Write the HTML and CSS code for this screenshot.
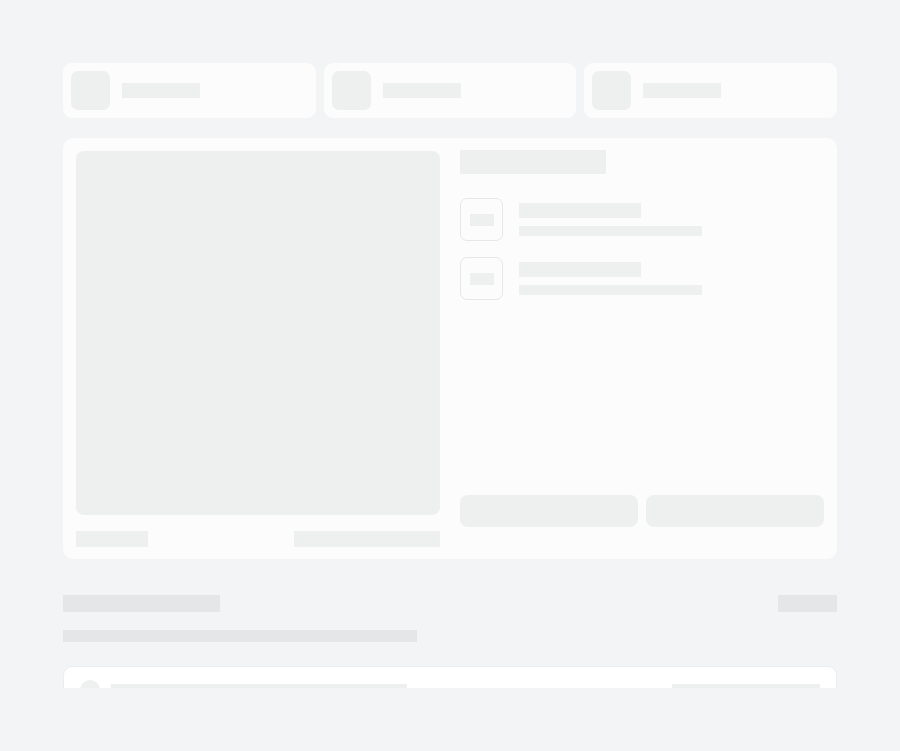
FILE: index.html
```html
<!DOCTYPE html>
<html lang="en">
<head>
<meta charset="utf-8">
<title>Loading</title>
<link rel="stylesheet" href="styles.css">
</head>
<body>
<div class="page">
  <div class="stats">
    <div class="stat"><div class="stat-icon sk"></div><div class="stat-line sk"></div></div>
    <div class="stat"><div class="stat-icon sk"></div><div class="stat-line sk"></div></div>
    <div class="stat"><div class="stat-icon sk"></div><div class="stat-line sk"></div></div>
  </div>

  <div class="main-card">
    <div class="media">
      <div class="media-img sk"></div>
      <div class="media-meta">
        <div class="meta-a sk"></div>
        <div class="meta-b sk"></div>
      </div>
    </div>
    <div class="details">
      <div class="details-title sk"></div>
      <div class="items">
        <div class="item">
          <div class="item-box"><div class="item-box-inner sk"></div></div>
          <div class="item-text">
            <div class="item-l1 sk"></div>
            <div class="item-l2 sk"></div>
          </div>
        </div>
        <div class="item">
          <div class="item-box"><div class="item-box-inner sk"></div></div>
          <div class="item-text">
            <div class="item-l1 sk"></div>
            <div class="item-l2 sk"></div>
          </div>
        </div>
      </div>
      <div class="actions">
        <div class="btn sk"></div>
        <div class="btn sk"></div>
      </div>
    </div>
  </div>

  <div class="section">
    <div class="section-head">
      <div class="section-title skb"></div>
      <div class="section-link skb"></div>
    </div>
    <div class="section-sub skb"></div>
    <div class="row-card">
      <div class="row-dot sk"></div>
      <div class="row-main sk"></div>
      <div class="row-side sk"></div>
    </div>
  </div>
</div>
</body>
</html>
```
FILE: styles.css
```css
html, body {
  margin: 0;
  padding: 0;
}
body {
  background: #f3f4f6;
  font-family: "Liberation Sans", Arial, sans-serif;
}
.page {
  box-sizing: border-box;
  height: 688px;
  overflow: hidden;
  padding: 63px 63px 0 63px;
}
.sk {
  background: #eeefef;
}
.skb {
  background: #e5e6e8;
}

/* stats */
.stats {
  display: grid;
  grid-template-columns: repeat(3, 1fr);
  gap: 8px;
}
.stat {
  box-sizing: border-box;
  height: 55px;
  padding: 8px;
  background: #fcfcfc;
  border-radius: 9px;
  display: flex;
  align-items: center;
  gap: 12px;
}
.stat-icon {
  width: 39px;
  height: 39px;
  border-radius: 7px;
}
.stat-line {
  width: 78px;
  height: 15px;
}

/* main card */
.main-card {
  margin-top: 20px;
  background: #fcfcfc;
  border-radius: 10px;
  padding: 13px 13px 12px 13px;
  display: grid;
  grid-template-columns: 364px 364px;
  gap: 20px;
}
.media-img {
  width: 364px;
  height: 364px;
  border-radius: 8px;
}
.media-meta {
  margin-top: 16px;
  display: flex;
  justify-content: space-between;
}
.meta-a {
  width: 72px;
  height: 16px;
}
.meta-b {
  width: 146px;
  height: 16px;
}
.details {
  display: flex;
  flex-direction: column;
}
.details-title {
  width: 146px;
  height: 24px;
  margin-top: -1px;
}
.items {
  margin-top: 24px;
  display: flex;
  flex-direction: column;
  gap: 16px;
}
.item {
  display: flex;
  gap: 16px;
}
.item-box {
  box-sizing: border-box;
  width: 43px;
  height: 43px;
  border: 1px solid #e7e7e7;
  border-radius: 7px;
  display: flex;
  align-items: center;
  justify-content: center;
}
.item-box-inner {
  width: 24px;
  height: 12px;
}
.item-text {
  padding-top: 5px;
}
.item-l1 {
  width: 122px;
  height: 15px;
}
.item-l2 {
  width: 183px;
  height: 10px;
  margin-top: 8px;
}
.actions {
  margin-top: auto;
  margin-bottom: 20px;
  display: grid;
  grid-template-columns: 1fr 1fr;
  gap: 8px;
}
.btn {
  height: 32px;
  border-radius: 8px;
}

/* section */
.section {
  margin-top: 36px;
}
.section-head {
  display: flex;
  justify-content: space-between;
}
.section-title {
  width: 157px;
  height: 17px;
}
.section-link {
  width: 59px;
  height: 17px;
}
.section-sub {
  margin-top: 18px;
  width: 354px;
  height: 12px;
}
.row-card {
  margin-top: 24px;
  box-sizing: border-box;
  background: #ffffff;
  border: 1px solid #ebecee;
  border-radius: 9px;
  padding: 13px 16px 16px 16px;
  display: flex;
  align-items: flex-start;
}
.row-dot {
  width: 20px;
  height: 20px;
  border-radius: 50%;
  flex: none;
}
.row-main {
  margin-left: 11px;
  margin-top: 4px;
  width: 296px;
  height: 14px;
}
.row-side {
  margin-left: auto;
  margin-top: 4px;
  width: 148px;
  height: 14px;
}
```
